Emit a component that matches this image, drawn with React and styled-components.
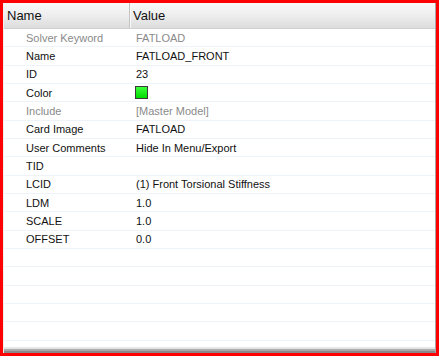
import React from "react";
import styled, { createGlobalStyle } from "styled-components";

const Global = createGlobalStyle`
  html, body { margin: 0; padding: 0; background: #ffffff; }
  body { font-family: "Liberation Sans", Arial, sans-serif; }
`;

const Frame = styled.div`
  box-sizing: border-box;
  width: 439px;
  height: 356px;
  border: 3px solid #ff0000;
  display: flex;
  flex-direction: column;
  background: #ffffff;
`;

const Inner = styled.div`
  flex: 1;
  display: flex;
  flex-direction: column;
  border-left: 1px solid #f0f0f0;
  border-right: 1px solid #a8a8a8;
  overflow: hidden;
`;

const Header = styled.div`
  display: grid;
  grid-template-columns: 126px 1fr;
  height: 25px;
  border-bottom: 1px solid #d0d0d0;
  background: linear-gradient(#fafafa, #ececec 55%, #dcdcdc);
  flex-shrink: 0;
`;

const HeadCell = styled.div`
  display: flex;
  align-items: center;
  padding-left: ${(p) => p.$pad}px;
  font-size: 13px;
  color: #111111;
  border-right: ${(p) => (p.$divider ? "1px solid #c4c4c4" : "none")};
  box-shadow: ${(p) => (p.$divider ? "1px 0 0 #f8f8f8" : "none")};
`;

const Body = styled.div`
  flex: 1;
  display: flex;
  flex-direction: column;
`;

const Row = styled.div`
  box-sizing: border-box;
  display: grid;
  grid-template-columns: 127px 1fr;
  height: 18.33px;
  border-bottom: 1px solid #edf3f9;
  flex-shrink: 0;
`;

const Cell = styled.div`
  display: flex;
  align-items: center;
  padding-left: ${(p) => p.$pad}px;
  font-size: 11px;
  color: ${(p) => (p.$muted ? "#8a8a8a" : "#111111")};
  white-space: nowrap;
`;

const Swatch = styled.span`
  box-sizing: border-box;
  display: inline-block;
  width: 13px;
  height: 13px;
  margin-left: -1px;
  border: 1px solid #3a3a3a;
  background: linear-gradient(#3cff3c, #00dd00);
`;

const BottomStrip = styled.div`
  height: 6px;
  flex-shrink: 0;
  background: linear-gradient(#ececec 0, #e0e0e0 33%, #b4b4b4 34%, #a0a0a0 70%, #8a8a8a 71%, #8a8a8a 100%);
`;

const rows = [
  { name: "Solver Keyword", value: "FATLOAD", muted: true },
  { name: "Name", value: "FATLOAD_FRONT" },
  { name: "ID", value: "23" },
  { name: "Color", swatch: true },
  { name: "Include", value: "[Master Model]", muted: true },
  { name: "Card Image", value: "FATLOAD" },
  { name: "User Comments", value: "Hide In Menu/Export" },
  { name: "TID", value: "" },
  { name: "LCID", value: "(1) Front Torsional Stiffness" },
  { name: "LDM", value: "1.0" },
  { name: "SCALE", value: "1.0" },
  { name: "OFFSET", value: "0.0" },
];

export default function App() {
  return (
    <>
      <Global />
      <Frame>
        <Inner>
          <Header>
            <HeadCell $pad={3} $divider>Name</HeadCell>
            <HeadCell $pad={3}>Value</HeadCell>
          </Header>
          <Body>
            {rows.map((r) => (
              <Row key={r.name}>
                <Cell $pad={22} $muted={r.muted}>{r.name}</Cell>
                <Cell $pad={5} $muted={r.muted}>
                  {r.swatch ? <Swatch /> : r.value}
                </Cell>
              </Row>
            ))}
            {Array.from({ length: 5 }).map((_, i) => (
              <Row key={"e" + i}>
                <Cell $pad={22} />
                <Cell $pad={5} />
              </Row>
            ))}
          </Body>
          <BottomStrip />
        </Inner>
      </Frame>
    </>
  );
}
